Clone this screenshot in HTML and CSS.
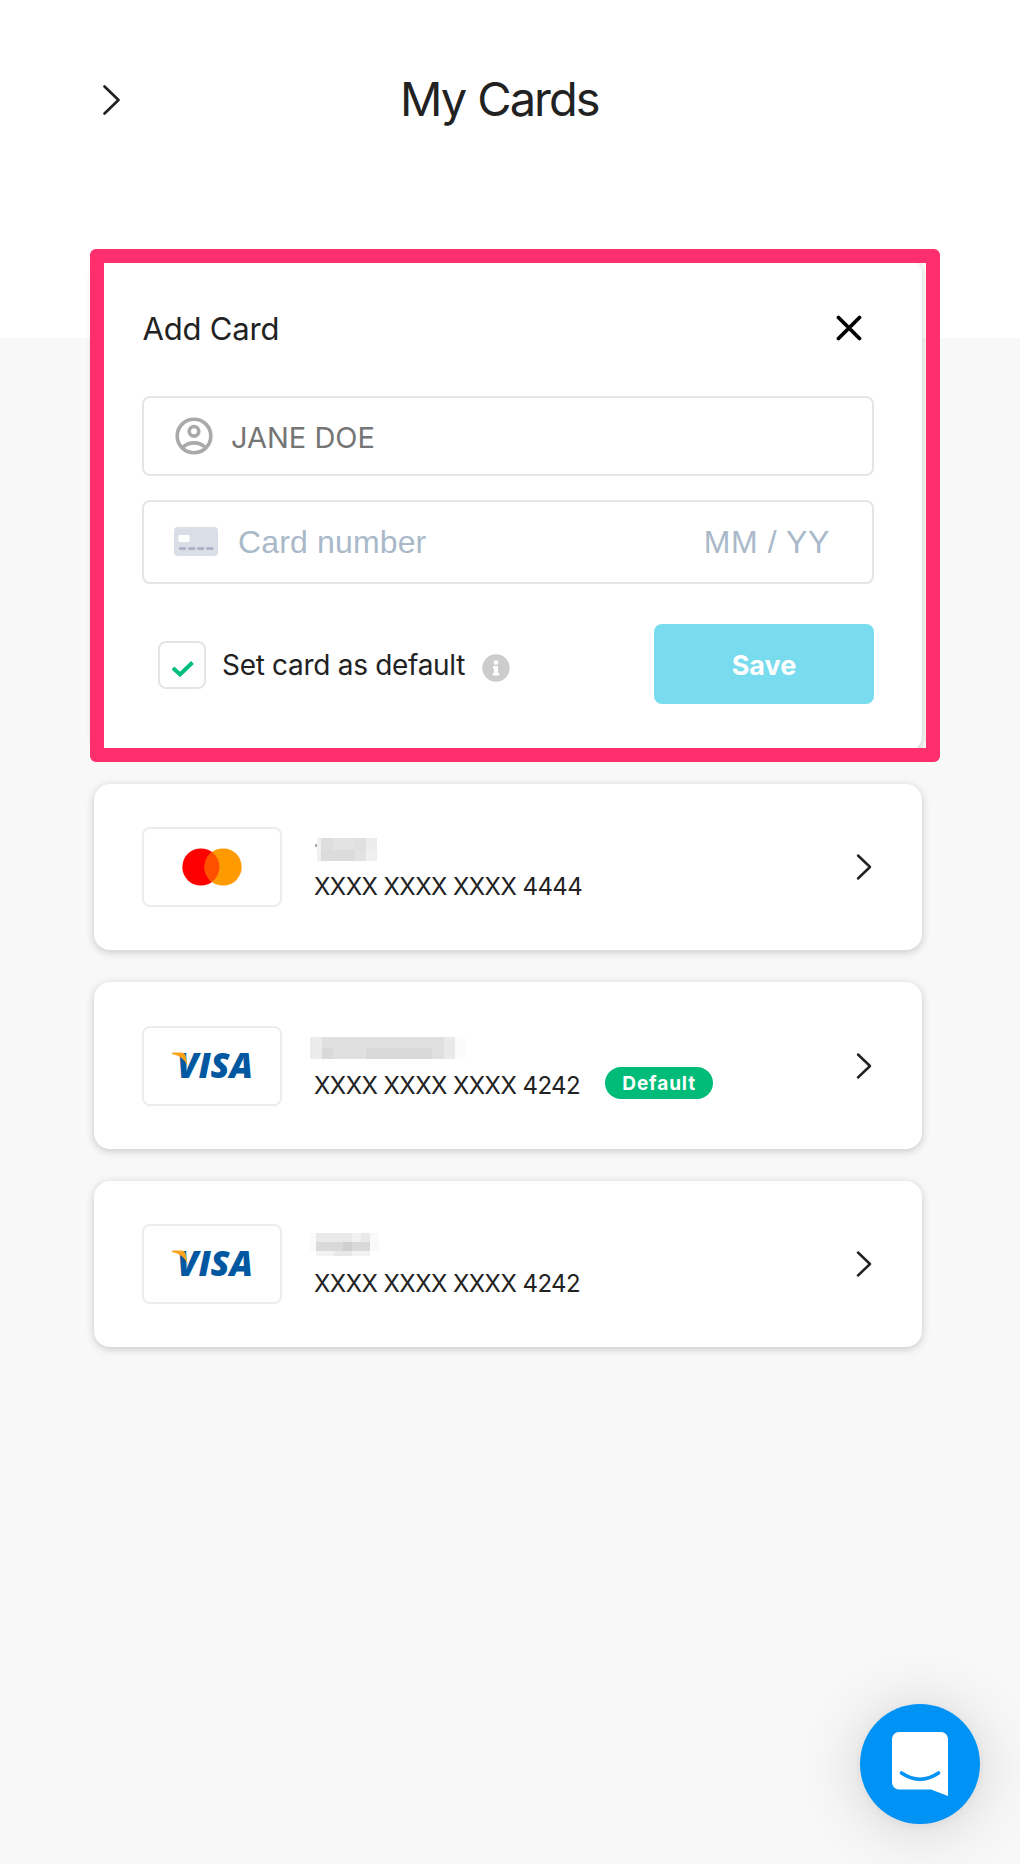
FILE: index.html
```html
<!DOCTYPE html>
<html lang="en">
<head>
<meta charset="utf-8">
<title>My Cards</title>
<link rel="stylesheet" href="styles.css">
</head>
<body>
<header class="header">
  <svg class="header-back" width="20" height="34" viewBox="0 0 20 34"><path d="M2.500 3.500 16.500 17 2.500 30.500" fill="none" stroke="#222" stroke-width="2.700" stroke-linecap="round" stroke-linejoin="round"/></svg>
  <h1 class="title">My Cards</h1>
</header>
<main class="cards">
  <section class="card form">
    <div class="form-head">
      <h2 class="form-title">Add Card</h2>
      <svg class="close" width="26" height="26" viewBox="0 0 26 26"><path d="M2.500 2.500 23.500 23.500M23.500 2.500 2.500 23.500" stroke="#000" stroke-width="3.800" stroke-linecap="round"/></svg>
    </div>
    <div class="field field-name">
      <svg width="38" height="38" viewBox="0 0 38 38" fill="none" stroke="#a9a9a9" stroke-width="3.600"><circle cx="19" cy="19" r="16.800"/><circle cx="19" cy="14.300" r="4.800"/><path d="M7.500 30.500C14 24.300 24 24.300 30.500 30.500"/></svg>
      <span class="name-text">JANE DOE</span>
    </div>
    <div class="field field-number">
      <svg class="card-icon" width="44" height="29" viewBox="0 0 44 29"><rect width="44" height="29" rx="4" fill="#dadee7"/><rect x="4.500" y="8" width="11" height="7" rx="1" fill="#fff"/><path d="M6.200 21.500h4.500M15.500 21.500h4.500M24.500 21.500h4.500M33.500 21.500h4.500" stroke="#abb4c8" stroke-width="3" stroke-linecap="round"/></svg>
      <span class="number-text">Card number</span>
      <span class="expiry-text">MM / YY</span>
    </div>
    <div class="form-foot">
      <span class="checkbox"><svg width="24" height="18" viewBox="0 0 24 18"><path d="M2 8 9 14.500 21.500 2.500" fill="none" stroke="#00bf7c" stroke-width="4"/></svg></span>
      <span class="check-label">Set card as default</span>
      <svg class="info" width="28" height="28" viewBox="0 0 28 28"><circle cx="14" cy="14" r="13.700" fill="#ccc"/><circle cx="14" cy="8.500" r="2.300" fill="#fff"/><path d="M11 12h5v7h1.300v2.400h-6.600V19H12v-4.600h-1z" fill="#fff"/></svg>
      <button class="save">Save</button>
    </div>
    <div class="highlight"></div>
  </section>
  <section class="card row">
    <div class="logo"><svg width="60" height="38" viewBox="0 0 60 38"><circle cx="18.900" cy="19" r="18.600" fill="#f00"/><circle cx="41.100" cy="19" r="18.600" fill="#ff9a00"/><path d="M30 4.100a18.600 18.600 0 0 1 0 29.800 18.600 18.600 0 0 1 0-29.800z" fill="#ff5000"/></svg></div>
    <div class="details">
      <svg class="mask" width="160" height="28" viewBox="310 836 160 28" shape-rendering="crispEdges"><path fill="#aaa" d="M315 844h2v3h-2z"/><path fill="#f0f0f0" d="M317 838h60v23h-60z"/><path fill="#dedede" d="M321 838h12v12h-12z"/><path fill="#e3e3e3" d="M333 838h22v12h-22z"/><path fill="#e0e0e0" d="M355 838h11v12h-11z"/><path fill="#ececec" d="M366 838h11v11h-11z"/><path fill="#dcdcdc" d="M321 850h34v11h-34z"/><path fill="#e2e2e2" d="M355 850h11v11h-11z"/></svg>
      <div class="number-line"><span class="number">XXXX XXXX XXXX 4444</span></div>
    </div>
    <svg class="chevron" width="20" height="30" viewBox="0 0 20 30"><path d="M4 3.500 16 15 4 26.500" fill="none" stroke="#222" stroke-width="2.500" stroke-linecap="round" stroke-linejoin="round"/></svg>
  </section>
  <section class="card row row-tall">
    <div class="logo"><svg class="visa" width="82" height="52" viewBox="0 -12 82 52"><text class="visa-text" x="6" y="26" textLength="76" lengthAdjust="spacingAndGlyphs">VISA</text><path d="M1 0.500h9q3.500 0 4.500 3l2 10Q12 4 1 2z" fill="#faa41b"/></svg></div>
    <div class="details">
      <svg class="mask" width="160" height="28" viewBox="310 1035 160 28" shape-rendering="crispEdges"><path fill="#ebebeb" d="M310 1037h12v22h-12z"/><path fill="#e0e0e0" d="M322 1037h122v11h-122z"/><path fill="#d9d9d9" d="M322 1048h110v11h-110z"/><path fill="#e0e0e0" d="M333 1048h33v11h-33zM432 1048h12v11h-12z"/><path fill="#e9e9e9" d="M444 1037h11v22h-11z"/><path fill="#fbfbfb" d="M455 1037h11v22h-11z"/></svg>
      <div class="number-line"><span class="number">XXXX XXXX XXXX 4242</span><span class="badge">Default</span></div>
    </div>
    <svg class="chevron" width="20" height="30" viewBox="0 0 20 30"><path d="M4 3.500 16 15 4 26.500" fill="none" stroke="#222" stroke-width="2.500" stroke-linecap="round" stroke-linejoin="round"/></svg>
  </section>
  <section class="card row">
    <div class="logo"><svg class="visa" width="82" height="52" viewBox="0 -12 82 52"><text class="visa-text" x="6" y="26" textLength="76" lengthAdjust="spacingAndGlyphs">VISA</text><path d="M1 0.500h9q3.500 0 4.500 3l2 10Q12 4 1 2z" fill="#faa41b"/></svg></div>
    <div class="details">
      <svg class="mask" width="160" height="28" viewBox="310 1235 160 28" shape-rendering="crispEdges"><path fill="#fafafa" d="M310 1235h69v18h-69z"/><path fill="#e9e9e9" d="M316 1235h54v9h-54z"/><path fill="#d9d9d9" d="M316 1244h54v9h-54z"/><path fill="#f2f2f2" d="M316 1253h54v5h-54zM352 1235h9v9h-9z"/><path fill="#cfcfcf" d="M343 1244h9v9h-9z"/><path fill="#e8e8e8" d="M334 1253h18v5h-18z"/></svg>
      <div class="number-line"><span class="number">XXXX XXXX XXXX 4242</span></div>
    </div>
    <svg class="chevron" width="20" height="30" viewBox="0 0 20 30"><path d="M4 3.500 16 15 4 26.500" fill="none" stroke="#222" stroke-width="2.500" stroke-linecap="round" stroke-linejoin="round"/></svg>
  </section>
</main>
<button class="chat" aria-label="Open chat"><svg width="56" height="64" viewBox="0 0 56 64"><path d="M7 0h42a7 7 0 0 1 7 7v57l-17-6.500H7a7 7 0 0 1-7-7V7a7 7 0 0 1 7-7z" fill="#fff"/><path d="M9.500 41Q28 53.500 46.500 41" fill="none" stroke="#0092f5" stroke-width="3.600" stroke-linecap="round"/></svg></button>
</body>
</html>
```

FILE: styles.css
```css
* { box-sizing: border-box; }
body {
  margin: 0;
  height: 1864px;
  overflow: hidden;
  background: linear-gradient(#fff 338px, #f8f8f8 338px);
  font-family: Inter, "Liberation Sans", sans-serif;
  color: #222;
}
svg { display: block; flex: none; }
.header {
  height: 258px;
  padding: 70px 0 0 102px;
  display: flex;
  align-items: flex-start;
}
.header-back { margin-top: 13px; }
.title {
  margin: 0 0 0 278px;
  font-size: 47px;
  line-height: 58px;
  font-weight: 400;
  letter-spacing: -2px;
  word-spacing: 1px;
  white-space: nowrap;
}
.cards {
  width: 828px;
  margin-left: 94px;
  display: flex;
  flex-direction: column;
  gap: 32px;
}
.card {
  background: #fff;
  border-radius: 16px;
  box-shadow: 0 2px 8px rgba(0, 0, 0, 0.2);
}
.form {
  position: relative;
  height: 494px;
  padding: 47px 48px 0;
}
.highlight {
  position: absolute;
  inset: -9px -18px -10px -4px;
  border: 14px solid #ff2f6e;
  border-radius: 6px;
}
.form-head {
  height: 91px;
  display: flex;
  justify-content: space-between;
  align-items: flex-start;
}
.form-title {
  margin: 4px 0 0 0.5px;
  font-size: 31px;
  line-height: 40px;
  font-weight: 400;
  letter-spacing: -0.2px;
}
.close { margin: 10px 12px 0 0; }
.field {
  border: 2px solid #e5e5e5;
  border-radius: 8px;
  display: flex;
  align-items: center;
}
.field-name {
  height: 80px;
  padding-left: 31px;
  gap: 18px;
  margin-bottom: 24px;
}
.name-text { color: #757575; font-size: 29px; margin-top: 3px; }
.field-number {
  height: 84px;
  padding: 0 42px 0 30px;
  font-family: "Liberation Sans", sans-serif;
  font-size: 32px;
  color: #a9b9c9;
}
.card-icon { margin-bottom: 2px; }
.number-text { margin-left: 20px; letter-spacing: 0.15px; }
.expiry-text { margin-left: auto; letter-spacing: 0.6px; }
.form-foot {
  height: 80px;
  margin-top: 40px;
  padding-left: 16px;
  display: flex;
  align-items: center;
}
.checkbox {
  width: 48px;
  height: 48px;
  margin-top: 2px;
  border: 2px solid #e5e5e5;
  border-radius: 8px;
  padding: 17px 0 0 11px;
}
.check-label { margin: 2px 0 0 16px; font-size: 28px; letter-spacing: -0.3px; white-space: nowrap; }
.info { margin: 8px 0 0 17px; }
.save {
  margin-left: auto;
  width: 220px;
  height: 80px;
  border: 0;
  border-radius: 8px;
  background: #78dcee;
  color: #fff;
  font: 700 27px/80px Inter, sans-serif;
  padding: 2px 0 0;
}
.row {
  height: 166px;
  padding: 0 48px;
  display: flex;
  align-items: center;
}
.row-tall { height: 167px; }
.logo {
  width: 140px;
  height: 80px;
  border: 2px solid #ececec;
  border-radius: 8px;
  display: flex;
  align-items: center;
  justify-content: center;
}
.visa { overflow: visible; }
.visa-text {
  font: italic 800 36px "Open Sans", sans-serif;
  fill: #0158a0;
}
.details { margin-left: 28px; height: 80px; padding-top: 9px; }
.number-line { display: flex; height: 32px; margin: 6.5px 0 0 4px; align-items: center; }
.number { font-size: 24px; letter-spacing: -0.55px; white-space: nowrap; }
.badge {
  height: 32px;
  width: 108px;
  margin: -4px 0 0 25px;
  border-radius: 16px;
  background: #00bc78;
  color: #fff;
  font-size: 19px;
  font-weight: 700;
  letter-spacing: 0.9px;
  line-height: 33px;
  text-align: center;
}
.chevron { margin-left: auto; }
.chat {
  position: fixed;
  left: 860px;
  top: 1704px;
  width: 120px;
  height: 120px;
  padding: 0;
  border: 0;
  border-radius: 50%;
  background: #0092f5;
  box-shadow: 0 2px 12px rgba(0, 0, 0, 0.06), 0 4px 64px rgba(0, 0, 0, 0.16);
  display: flex;
  align-items: center;
  justify-content: center;
}
```
